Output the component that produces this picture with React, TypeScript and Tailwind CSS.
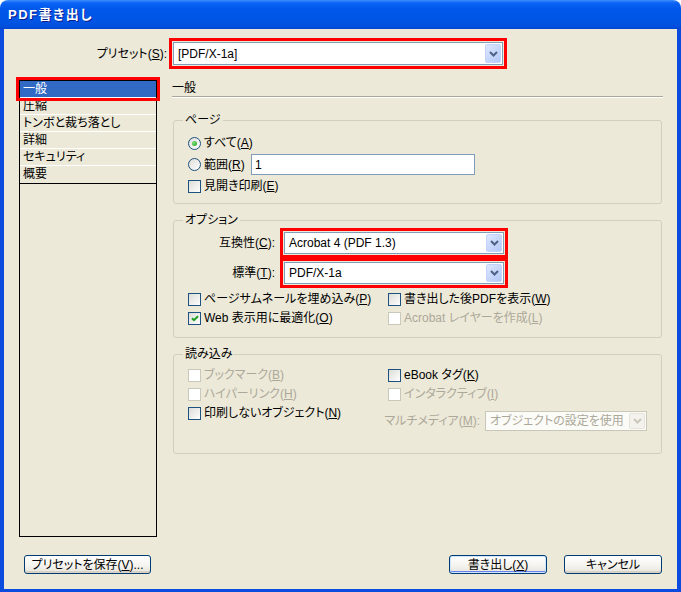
import React from 'react';

const font = "font-['Liberation_Sans','Noto_Sans_CJK_JP',sans-serif] [font-feature-settings:'palt']";

const categories = ['一般', '圧縮', 'トンボと裁ち落とし', '詳細', 'セキュリティ', '概要'];

function Key({ k }: { k: string }) {
  return (
    <>
      (<span className="underline underline-offset-[1px]">{k}</span>)
    </>
  );
}

function ComboArrow({ disabled }: { disabled?: boolean }) {
  return (
    <div
      className={`flex h-full w-[16px] shrink-0 items-center justify-center rounded-[2px] border ${
        disabled
          ? 'border-[#E6E4DA] bg-[#F3F2EC]'
          : 'border-[#C3D3FD] bg-[linear-gradient(135deg,#DDE7FE,#B3C8F7)]'
      }`}
    >
      <svg width="9" height="6" viewBox="0 0 9 6">
        <path d="M1 1 L4.5 4.5 L8 1" fill="none" stroke={disabled ? '#C9C7BA' : '#4D6185'} strokeWidth="2" />
      </svg>
    </div>
  );
}

function Combo({ value, className, disabled }: { value: string; className?: string; disabled?: boolean }) {
  return (
    <div
      className={`flex items-center border p-[1px] ${
        disabled ? 'border-[#C9C7BA] bg-[#FBFBF8] text-[#ACA899]' : 'border-[#7F9DB9] bg-white text-black'
      } ${className ?? ''}`}
    >
      <span className="flex-1 truncate pl-[3px] leading-[16px]">{value}</span>
      <ComboArrow disabled={disabled} />
    </div>
  );
}

function Check({ checked, disabled }: { checked?: boolean; disabled?: boolean }) {
  return (
    <span
      className={`flex h-[13px] w-[13px] shrink-0 items-center justify-center border ${
        disabled ? 'border-[#CAC8BB] bg-white' : 'border-[#1C5180] bg-[linear-gradient(135deg,#DCDCD7,#FFFFFF)]'
      }`}
    >
      {checked && (
        <svg width="8" height="7" viewBox="0 0 8 7">
          <path d="M1 3.2 L3 5.2 L7 1.2" fill="none" stroke="#21A121" strokeWidth="2" />
        </svg>
      )}
    </span>
  );
}

function Radio({ checked }: { checked?: boolean }) {
  return (
    <span className="flex h-[13px] w-[13px] shrink-0 items-center justify-center rounded-full border border-[#1C5180] bg-[linear-gradient(135deg,#DCDCD7,#FFFFFF)]">
      {checked && <span className="h-[5px] w-[5px] rounded-full bg-[radial-gradient(circle_at_35%_35%,#7BE07A,#21A121)]" />}
    </span>
  );
}

function CheckRow({ label, k, checked, disabled }: { label: string; k: string; checked?: boolean; disabled?: boolean }) {
  return (
    <div className={`flex h-[18px] items-center gap-[3px] ${disabled ? 'text-[#ACA899]' : 'text-black'}`}>
      <Check checked={checked} disabled={disabled} />
      <span className="whitespace-nowrap leading-[16px]">
        {label}
        <Key k={k} />
      </span>
    </div>
  );
}

function XPButton({ children, primary, className }: { children: React.ReactNode; primary?: boolean; className?: string }) {
  return (
    <button
      className={`flex h-[19px] items-center justify-center rounded-[3px] border border-[#003C74] bg-[linear-gradient(to_bottom,#FFFFFF,#F5F4EF_55%,#E5E3DA)] text-[12px] leading-none text-black ${
        primary
          ? 'shadow-[inset_0_0_0_1px_#CEE7FF,inset_0_-1px_0_1px_#6982EE]'
          : 'shadow-[inset_0_-2px_0_#D8D2C6]'
      } ${className ?? ''}`}
    >
      {children}
    </button>
  );
}

export default function App() {
  return (
    <div className={`h-[592px] w-[681px] bg-white text-[12px] text-black ${font}`}>
      <div className="flex h-full flex-col overflow-hidden rounded-t-[8px]">
        {/* title bar */}
        <div className="flex h-[29px] shrink-0 items-center bg-[linear-gradient(to_bottom,#3D8EFD_0px,#0A63F5_3px,#0058EA_9px,#0055E5_20px,#0050DF_26px,#0045CE_29px)] pl-[8px]">
          <span className="pt-[1px] text-[13px] font-bold tracking-[1.5px] text-white [text-shadow:1px_1px_0_#0A1C8C]">PDF書き出し</span>
        </div>

        {/* body */}
        <div className="flex flex-1 flex-col border-x-4 border-b-[3px] border-[#0B4BDE] bg-[#ECE9D8] pt-[9px]">
          {/* preset */}
          <div className="flex h-[31px] items-center pl-[15px]">
            <div className="w-[148px] text-right leading-[16px]">
              プリセット<Key k="S" />:
            </div>
            <div className="ml-[2px] border-[3px] border-[#FF0000] p-[1px]">
              <Combo value="[PDF/X-1a]" className="h-[23px] w-[330px]" />
            </div>
          </div>

          {/* main */}
          <div className="mt-[11px] flex h-[457px] gap-[15px] pl-[15px]">
            {/* category list */}
            <div className="relative h-[457px] w-[138px] border border-black">
              <div className="border-b border-black">
                {categories.map((c, i) => (
                  <div
                    key={c}
                    className={`h-[17px] border-b border-white pl-[3px] leading-[16px] last:border-b-0 ${
                      i === 0 ? 'bg-[#316AC5] text-white' : ''
                    }`}
                  >
                    {c}
                  </div>
                ))}
              </div>
              <div className="absolute left-[-4px] top-[-4px] h-[24px] w-[144px] border-[3px] border-[#FF0000]" />
            </div>

            {/* panel */}
            <div className="flex w-[491px] flex-col">
              <div className="h-[17px] border-b border-[#ACA899] leading-[16px] shadow-[0_1px_0_#FFFFFF]">一般</div>

              <fieldset className="mx-[1px] mt-[15px] rounded-[3px] border border-[#D0D0BF] pb-[8px]">
                <legend className="ml-[9px] px-[2px] leading-[16px]">ページ</legend>
                <div className="flex flex-col gap-[2px] pl-[14px] pt-[6px]">
                  <div className="flex h-[18px] items-center gap-[3px]">
                    <Radio checked />
                    <span className="leading-[16px]">
                      すべて<Key k="A" />
                    </span>
                  </div>
                  <div className="flex h-[21px] items-center gap-[3px]">
                    <Radio />
                    <span className="w-[44px] leading-[16px]">
                      範囲<Key k="R" />
                    </span>
                    <div className="flex h-[21px] w-[224px] items-center border border-[#7F9DB9] bg-white pl-[3px]">1</div>
                  </div>
                  <CheckRow label="見開き印刷" k="E" />
                </div>
              </fieldset>

              <fieldset className="mx-[1px] mt-[8px] rounded-[3px] border border-[#D0D0BF] pb-[10px]">
                <legend className="ml-[9px] px-[2px] leading-[16px]">オプション</legend>
                <div className="flex items-center">
                  <div className="w-[101px] text-right leading-[16px]">
                    互換性<Key k="C" />:
                  </div>
                  <div className="ml-[5px] border-[3px] border-[#FF0000] p-[1px]">
                    <Combo value="Acrobat 4 (PDF 1.3)" className="h-[22px] w-[220px]" />
                  </div>
                </div>
                <div className="flex items-center">
                  <div className="w-[101px] text-right leading-[16px]">
                    標準<Key k="T" />:
                  </div>
                  <div className="ml-[5px] border-[3px] border-[#FF0000] p-[1px]">
                    <Combo value="PDF/X-1a" className="h-[22px] w-[220px]" />
                  </div>
                </div>
                <div className="mt-[2px] grid grid-cols-[200px_1fr] gap-y-[1px] pl-[14px]">
                  <CheckRow label="ページサムネールを埋め込み" k="P" />
                  <CheckRow label="書き出した後PDFを表示" k="W" />
                  <CheckRow label="Web 表示用に最適化" k="O" checked />
                  <CheckRow label="Acrobat レイヤーを作成" k="L" disabled />
                </div>
              </fieldset>

              <fieldset className="mx-[1px] mt-[8px] rounded-[3px] border border-[#D0D0BF] pb-[22px]">
                <legend className="ml-[9px] px-[2px] leading-[16px]">読み込み</legend>
                <div className="grid grid-cols-[200px_1fr] gap-y-[1px] pl-[14px] pt-[4px]">
                  <CheckRow label="ブックマーク" k="B" disabled />
                  <CheckRow label="eBook タグ" k="K" />
                  <CheckRow label="ハイパーリンク" k="H" disabled />
                  <CheckRow label="インタラクティブ" k="I" disabled />
                  <div className="self-start">
                    <CheckRow label="印刷しないオブジェクト" k="N" />
                  </div>
                  <div className="mt-[7px] flex h-[20px] items-center">
                    <div className="flex w-[92px] justify-end whitespace-nowrap leading-[16px] text-[#ACA899]">
                      <span>
                        マルチメディア<Key k="M" />:
                      </span>
                    </div>
                    <Combo value="オブジェクトの設定を使用" disabled className="ml-[5px] h-[20px] w-[162px]" />
                  </div>
                </div>
              </fieldset>
            </div>
          </div>

          {/* buttons */}
          <div className="mt-[18px] flex items-center justify-between pl-[20px] pr-[15px]">
            <XPButton className="w-[127px]">
              プリセットを保存<Key k="V" />...
            </XPButton>
            <div className="flex gap-[17px]">
              <XPButton primary className="w-[98px]">
                書き出し<Key k="X" />
              </XPButton>
              <XPButton className="w-[98px]">キャンセル</XPButton>
            </div>
          </div>
        </div>
      </div>
    </div>
  );
}
